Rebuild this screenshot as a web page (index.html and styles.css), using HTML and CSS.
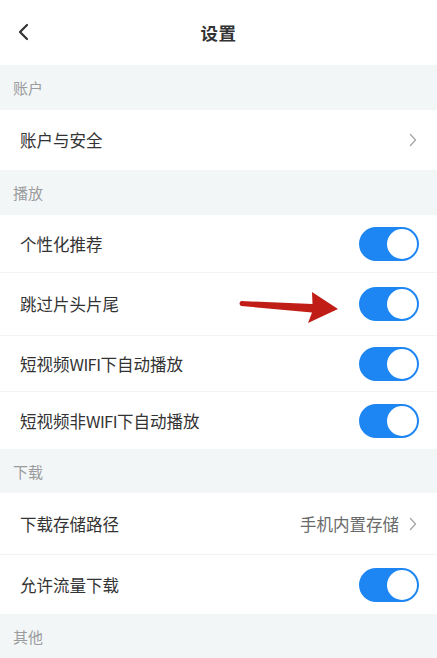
FILE: index.html
```html
<!DOCTYPE html>
<html lang="zh-CN">
<head>
<meta charset="utf-8">
<title>设置</title>
<link rel="stylesheet" href="styles.css">
</head>
<body>
<div class="page">
  <header class="topbar">
    <svg class="back" width="12" height="18" viewBox="0 0 12 18"><path d="M10 2 L3 9 L10 16" fill="none" stroke="#333" stroke-width="2.2" stroke-linecap="round" stroke-linejoin="round"/></svg>
    <h1 class="title">设置</h1>
  </header>

  <div class="section">账户</div>
  <div class="row row-60">
    <span class="label">账户与安全</span>
    <span class="right"><svg class="chev" width="8" height="14" viewBox="0 0 8 14"><path d="M1.5 1.5 L6.5 7 L1.5 12.5" fill="none" stroke="#a9a9a9" stroke-width="1.4" stroke-linecap="round" stroke-linejoin="round"/></svg></span>
  </div>

  <div class="section">播放</div>
  <div class="row row-58 divided">
    <span class="label">个性化推荐</span>
    <span class="toggle"><span class="knob"></span></span>
  </div>
  <div class="row row-63 divided">
    <span class="label">跳过片头片尾</span>
    <span class="toggle"><span class="knob"></span></span>
  </div>
  <div class="row row-56 divided">
    <span class="label">短视频<span class="latin">WIFI</span>下自动播放</span>
    <span class="toggle"><span class="knob"></span></span>
  </div>
  <div class="row row-57">
    <span class="label">短视频非<span class="latin">WIFI</span>下自动播放</span>
    <span class="toggle"><span class="knob"></span></span>
  </div>

  <div class="section section-sm">下载</div>
  <div class="row row-62 divided">
    <span class="label">下载存储路径</span>
    <span class="right"><span class="value">手机内置存储</span><svg class="chev" width="8" height="14" viewBox="0 0 8 14"><path d="M1.5 1.5 L6.5 7 L1.5 12.5" fill="none" stroke="#a9a9a9" stroke-width="1.4" stroke-linecap="round" stroke-linejoin="round"/></svg></span>
  </div>
  <div class="row">
    <span class="label">允许流量下载</span>
    <span class="toggle"><span class="knob"></span></span>
  </div>

  <div class="section">其他</div>

  <svg class="arrow" width="110" height="40" viewBox="0 0 110 40">
    <path d="M3 12 Q0 14.5 3 17 L74 23.5 L70 34 L100 20 L74 3 L74.5 15 Z" fill="#c11d17"/>
  </svg>
</div>
</body>
</html>
```

FILE: styles.css
```css
html, body {
  margin: 0;
  padding: 0;
  background: #ffffff;
}
body {
  font-family: "Noto Sans CJK SC", "Noto Sans", sans-serif;
  color: #333333;
}
.page {
  position: relative;
  width: 437px;
  height: 658px;
  overflow: hidden;
}
.topbar {
  height: 65px;
  display: flex;
  align-items: center;
  justify-content: center;
  position: relative;
}
.back {
  position: absolute;
  left: 17px;
  top: 23px;
}
.title {
  margin: 0;
  font-size: 17.5px;
  font-weight: 700;
  color: #333333;
  letter-spacing: 0.5px;
}
.section {
  height: 45px;
  background: #f3f6f7;
  display: flex;
  align-items: center;
  padding-left: 13px;
  font-size: 15px;
  color: #9a9c9d;
}
.section-sm {
  height: 44px;
}
.row {
  height: 59px;
  display: flex;
  align-items: center;
  justify-content: space-between;
  padding: 0 18px 0 20px;
  box-sizing: border-box;
  background: #ffffff;
}
.row-56 { height: 56px; }
.row-57 { height: 57px; }
.row-58 { height: 58px; }
.row-60 { height: 60px; }
.row-62 { height: 62px; }
.row-63 { height: 63px; }
.row.divided {
  border-bottom: 1px solid #f1f3f4;
}
.label {
  font-size: 16.5px;
  color: #333333;
}
.latin {
  letter-spacing: -0.6px;
}
.right {
  display: flex;
  align-items: center;
  gap: 10px;
  padding-right: 2px;
}
.value {
  font-size: 16.5px;
  color: #6a6a6a;
}
.chev {
  display: block;
}
.toggle {
  position: relative;
  width: 60px;
  height: 34px;
  border-radius: 17px;
  background: #1e86f2;
  display: flex;
  align-items: center;
  justify-content: flex-end;
  padding: 2px;
  box-sizing: border-box;
}
.knob {
  width: 30px;
  height: 30px;
  border-radius: 50%;
  background: #ffffff;
}
.arrow {
  position: absolute;
  left: 238px;
  top: 289px;
}
```
